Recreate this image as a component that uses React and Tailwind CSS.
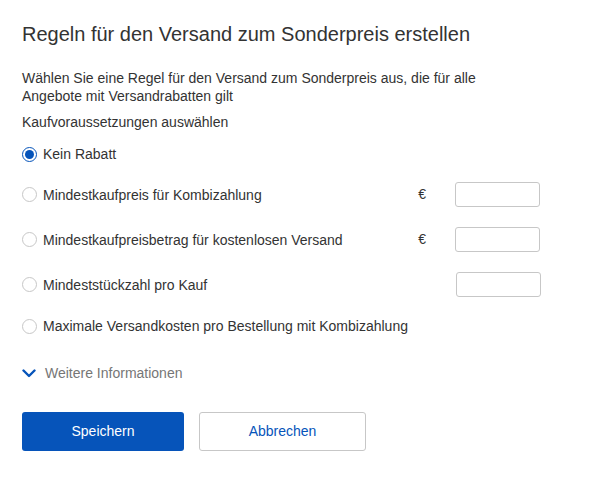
import React, { useState } from 'react'

const options = [
  { id: 'none', label: 'Kein Rabatt' },
  { id: 'combi', label: 'Mindestkaufpreis für Kombizahlung', euro: true, input: true },
  { id: 'free', label: 'Mindestkaufpreisbetrag für kostenlosen Versand', euro: true, input: true },
  { id: 'qty', label: 'Mindeststückzahl pro Kauf', input: true, shift: true },
  { id: 'max', label: 'Maximale Versandkosten pro Bestellung mit Kombizahlung' },
]

const Radio = ({ checked }) => (
  <span
    className={`flex h-[15px] w-[15px] shrink-0 items-center justify-center rounded-full border bg-white ${
      checked ? 'border-[#0654ba]' : 'border-[#c7c7c7]'
    }`}
  >
    {checked && <span className="h-[9px] w-[9px] rounded-full bg-[#0654ba]" />}
  </span>
)

export default function App() {
  const [selected, setSelected] = useState('none')

  return (
    <div
      className="min-h-[486px] w-[592px] bg-white px-[22px] pt-[22px] text-[#333]"
      style={{ fontFamily: '"Liberation Sans", Arial, sans-serif' }}
    >
      <h1 className="text-[20px] leading-[24px] font-normal text-[#333]">
        Regeln für den Versand zum Sonderpreis erstellen
      </h1>

      <p className="mt-[23px] w-[470px] text-[14px] leading-[18px]">
        Wählen Sie eine Regel für den Versand zum Sonderpreis aus, die für alle Angebote mit Versandrabatten gilt
      </p>
      <p className="mt-[8px] text-[14px] leading-[18px]">Kaufvoraussetzungen auswählen</p>

      <div className="mt-[13px] flex flex-col">
        {options.map((o, i) => (
          <label
            key={o.id}
            onClick={() => setSelected(o.id)}
            className={`flex cursor-pointer items-center ${
              o.input ? 'h-[25px]' : 'h-[20px]'
            } ${i === 0 ? '' : i === 1 ? 'mt-[18px]' : i === 4 ? 'mt-[19px]' : 'mt-[20px]'}`}
          >
            <Radio checked={selected === o.id} />
            <span className="ml-[6px] flex-1 text-[14px] leading-[18px]">{o.label}</span>
            {o.euro && <span className="mr-[29px] text-[14px]">€</span>}
            {o.input && (
              <input
                type="text"
                className={`h-[25px] w-[85px] rounded-[3px] border border-[#c7c7c7] bg-white px-2 text-[14px] outline-none ${
                  o.shift ? 'mr-[29px]' : 'mr-[30px]'
                }`}
              />
            )}
          </label>
        ))}
      </div>

      <button className="mt-[27px] flex items-center gap-[9px] text-[14px] text-[#767676]">
        <svg width="14" height="9" viewBox="0 0 14 9">
          <path d="M1.5 1.5 L7 7 L12.5 1.5" fill="none" stroke="#0654ba" strokeWidth="2.4" strokeLinecap="round" strokeLinejoin="round" />
        </svg>
        Weitere Informationen
      </button>

      <div className="mt-[28px] flex gap-[15px]">
        <button className="h-[39px] w-[162px] rounded-[3px] bg-[#0654ba] text-[14px] text-white">
          Speichern
        </button>
        <button className="h-[39px] w-[167px] rounded-[3px] border border-[#c7c7c7] bg-white text-[14px] text-[#0654ba]">
          Abbrechen
        </button>
      </div>
    </div>
  )
}
